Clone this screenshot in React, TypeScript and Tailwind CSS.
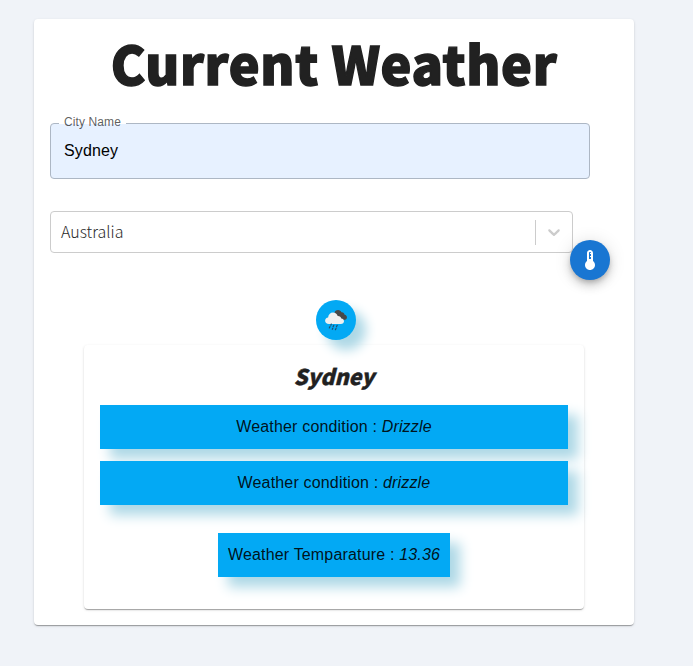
import React from "react";

const paper =
  "rounded bg-white shadow-[0_2px_1px_-1px_rgba(0,0,0,0.2),0_1px_1px_0_rgba(0,0,0,0.14),0_1px_3px_0_rgba(0,0,0,0.12)]";
const sourceFont = "font-['Noto_Sans_CJK_SC','Noto_Sans',sans-serif]";
const bar =
  "flex h-11 items-center justify-center whitespace-pre bg-[#03a9f4] text-base tracking-[0.17px] text-black/90 shadow-[10px_10px_12px_lightblue]";

function ThermometerIcon() {
  return (
    <svg width="24" height="24" viewBox="0 0 24 24" fill="white">
      <path d="M15 13V5c0-1.66-1.34-3-3-3S9 3.34 9 5v8c-1.21.91-2 2.37-2 4 0 2.76 2.24 5 5 5s5-2.24 5-5c0-1.63-.79-3.09-2-4zm-4-8c0-.55.45-1 1-1s1 .45 1 1h-1v1h1v2h-1v1h1v2h-2V5z" />
    </svg>
  );
}

function RainIcon() {
  return (
    <svg width="40" height="40" viewBox="0 0 40 40">
      <path
        d="M18.5 12.5c.8-1.700 2.100-2.500 3.700-2.400 1.500.1 2.700.9 3.200 2.100 1.800-.3 3 .9 3 2.400 1.700.5 2.800 1.800 2.500 3.400-.2 1.200-1.400 1.900-3 1.900l-7-2z"
        fill="#484848"
      />
      <path
        d="M13 24c-2.400 0-3.900-1.400-3.900-3.200 0-1.800 1.300-3 3-3.200.2-3 2.300-5 4.900-5 2.300 0 4 1.300 4.700 3.300 2-.1 3.300 1 3.600 2.600 1.600.2 2.700 1.200 2.700 2.700 0 1.600-1.300 2.800-3.200 2.800z"
        fill="#f0f0f0"
      />
      <path
        d="M15.300 24.100l-.5 1.100M14 26.500l-.7 1.500M17.800 25.300l-.7 1.500M16.800 28.300l-.5 1M21.200 25.300l-.7 1.500M20 28.400l-.6 1.300"
        stroke="#1f4f70"
        strokeWidth="1.2"
        strokeLinecap="round"
      />
    </svg>
  );
}

export default function App() {
  return (
    <div className="min-h-[666px] w-full bg-[#f0f3f8] pt-[19px] pl-[34px] font-['Liberation_Sans',Arial,sans-serif]">
      <div className={`${paper} h-[606px] w-[600px] px-4`}>
        <h1
          className={`${sourceFont} h-[104px] pt-[9px] text-center text-[52px] leading-[70px] font-black tracking-[0.6px] text-[#212121] [-webkit-text-stroke:1.4px_#212121]`}
        >
          Current Weather
        </h1>

        <div className="h-[64px] w-[540px]">
          <div className="relative h-14 rounded border border-[#adb7c4] bg-[#e7f1ff] px-[13px] pt-[15px]">
            <label className="absolute -top-[10px] left-2 bg-[linear-gradient(to_bottom,white_10px,#e7f1ff_10px)] px-[5px] text-xs leading-4 tracking-[0.11px] text-black/65">
              City Name
            </label>
            <span className="block text-base leading-6 tracking-[0.15px] text-black">Sydney</span>
          </div>
        </div>

        <div className="mt-6 flex items-start">
          <div className="flex h-[42px] w-[523px] items-center rounded border border-[#cccccc] bg-white">
            <span
              className={`${sourceFont} flex-1 pb-[2px] pl-[10px] text-base font-light text-[#2a2a2a]`}
            >
              Australia
            </span>
            <span className="h-[25px] w-px bg-[#cccccc]" />
            <svg className="m-2" width="20" height="20" viewBox="0 0 20 20" fill="#cccccc">
              <path d="M4.516 7.548c0.436-0.446 1.043-0.481 1.576 0l3.908 3.747 3.908-3.747c0.533-0.481 1.141-0.446 1.574 0 0.436 0.445 0.408 1.197 0 1.615-0.406 0.418-4.695 4.502-4.695 4.502-0.217 0.223-0.502 0.335-0.787 0.335s-0.570-0.112-0.789-0.335c0 0-4.287-4.084-4.695-4.502s-0.436-1.170 0-1.615z" />
            </svg>
          </div>
          <button className="z-10 mt-[29px] -ml-[3px] flex size-10 shrink-0 items-center justify-center rounded-full bg-[#1976d2] shadow-[0_3px_5px_-1px_rgba(0,0,0,0.2),0_6px_10px_0_rgba(0,0,0,0.14),0_1px_18px_0_rgba(0,0,0,0.12)]">
            <ThermometerIcon />
          </button>
        </div>

        <div className="relative z-10 mt-5 ml-[266px] size-10 rounded-full bg-[#03a9f4] shadow-[10px_10px_12px_lightblue]">
          <RainIcon />
        </div>

        <div className={`${paper} mx-auto mt-[5px] h-[264px] w-[500px] px-4`}>
          <h2
            className={`${sourceFont} h-[60px] pt-[15px] text-center text-[21.5px] leading-8 font-black text-[#212121] italic [-webkit-text-stroke:0.4px_#212121]`}
          >
            Sydney
          </h2>
          <div className={bar}>
            Weather condition : <em>Drizzle</em>
          </div>
          <div className={`${bar} mt-3`}>
            Weather condition : <em>drizzle</em>
          </div>
          <div className={`${bar} mx-auto mt-7 w-[232px]`}>
            Weather Temparature : <em>13.36</em>
          </div>
        </div>
      </div>
    </div>
  );
}
